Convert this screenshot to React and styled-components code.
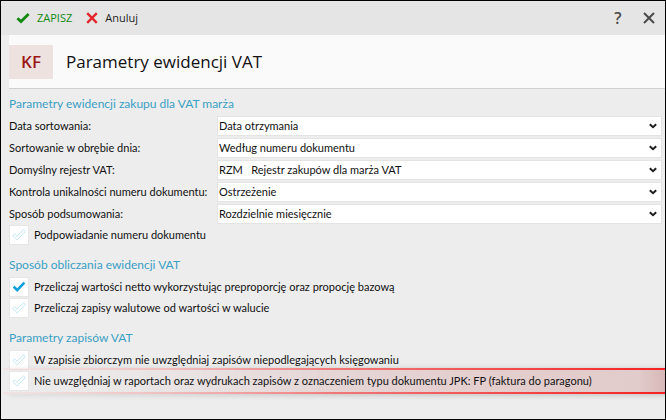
import React, { useState } from "react";
import styled, { createGlobalStyle, css } from "styled-components";

const SORT_FIELDS = [
	{
		id: "sortDate",
		label: "Data sortowania:",
		options: ["Data otrzymania", "Data wystawienia"],
	},
	{
		id: "sortInDay",
		label: "Sortowanie w obrębie dnia:",
		options: ["Według numeru dokumentu", "Według kolejności wpisu"],
	},
	{
		id: "register",
		label: "Domyślny rejestr VAT:",
		options: ["RZM\u00a0\u00a0\u00a0Rejestr zakupów dla marża VAT"],
	},
	{
		id: "unique",
		label: "Kontrola unikalności numeru dokumentu:",
		options: ["Ostrzeżenie", "Blokada"],
	},
	{
		id: "summary",
		label: "Sposób podsumowania:",
		options: ["Rozdzielnie miesięcznie", "Narastająco"],
	},
];

function SelectField({ id, label, options }) {
	return (
		<FieldRow>
			<FieldLabel htmlFor={id}>{label}</FieldLabel>
			<SelectBox>
				<Select id={id}>
					{options.map((v) => (
						<option key={v}>{v}</option>
					))}
				</Select>
				<Chevron viewBox="0 0 8 6" aria-hidden="true">
					<path d="M0.8 1.3 L4 4.2 L7.2 1.3" />
				</Chevron>
			</SelectBox>
		</FieldRow>
	);
}

function CheckField({ label, defaultChecked = false, marked = false }) {
	const [checked, setChecked] = useState(defaultChecked);
	return (
		<CheckRow $marked={marked}>
			<CheckBox>
				<CheckInput
					type="checkbox"
					checked={checked}
					onChange={() => setChecked(!checked)}
				/>
				<CheckMark $checked={checked} viewBox="0 0 14 12" aria-hidden="true">
					<path d="M0.7 6.6 L2.6 4.8 L5.2 7.2 L11.4 0.8 L13.3 2.6 L5.2 10.9 Z" />
				</CheckMark>
			</CheckBox>
			<CheckText>{label}</CheckText>
		</CheckRow>
	);
}

function App() {
	return (
		<>
			<GlobalStyle />
			<Window>
				<Toolbar>
					<ToolButton $color="#128a12">
						<SaveIcon viewBox="0 0 14 12" aria-hidden="true">
							<path d="M1.4 6.2 L5 9.6 L12.6 2" />
						</SaveIcon>
						ZAPISZ
					</ToolButton>
					<ToolButton $color="#1e1e1e">
						<CancelIcon viewBox="0 0 12 12" aria-hidden="true">
							<path d="M1.2 1.2 L10.8 10.8 M10.8 1.2 L1.2 10.8" />
						</CancelIcon>
						Anuluj
					</ToolButton>
					<Spacer />
					<HelpButton aria-label="Pomoc">?</HelpButton>
					<CloseButton aria-label="Zamknij">
						<CloseIcon viewBox="0 0 12 12" aria-hidden="true">
							<path d="M1 1 L11 11 M11 1 L1 11" />
						</CloseIcon>
					</CloseButton>
				</Toolbar>
				<Header>
					<Badge>KF</Badge>
					<Title>Parametry ewidencji VAT</Title>
				</Header>
				<Content>
					<Section>
						<SectionTitle>Parametry ewidencji zakupu dla VAT marża</SectionTitle>
						<FieldList>
							{SORT_FIELDS.map((v) => (
								<SelectField key={v.id} {...v} />
							))}
						</FieldList>
						<CheckField label="Podpowiadanie numeru dokumentu" />
					</Section>
					<Section>
						<SectionTitle>Sposób obliczania ewidencji VAT</SectionTitle>
						<CheckField
							label="Przeliczaj wartości netto wykorzystując preproporcję oraz propocję bazową"
							defaultChecked
						/>
						<CheckField label="Przeliczaj zapisy walutowe od wartości w walucie" />
					</Section>
					<Section>
						<SectionTitle>Parametry zapisów VAT</SectionTitle>
						<CheckField label="W zapisie zbiorczym nie uwzględniaj zapisów niepodlegających księgowaniu" />
						<CheckField
							label="Nie uwzględniaj w raportach oraz wydrukach zapisów z oznaczeniem typu dokumentu JPK: FP (faktura do paragonu)"
							marked
						/>
					</Section>
				</Content>
			</Window>
		</>
	);
}

const GlobalStyle = createGlobalStyle`
	* {
		box-sizing: border-box;
	}
	body {
		margin: 0;
		background: #ededed;
		color: #111;
		font: 11px/20px Lato, "Noto Sans", sans-serif;
	}
	button, select, input {
		margin: 0;
		padding: 0;
		border: 0;
		background: none;
		color: inherit;
		font: inherit;
	}
`;

const Window = styled.div`
	min-height: 100vh;
	border: 1px solid #000;
	background: #ededed;
	overflow: hidden;
`;

const Toolbar = styled.div`
	display: flex;
	align-items: center;
	height: 34px;
	padding: 0 10px 0 15px;
	background: #e5e5e5;
	font-family: "Open Sans", sans-serif;
`;

const ToolButton = styled.button`
	display: flex;
	align-items: center;
	gap: 7px;
	margin-right: 14px;
	color: ${({ $color }) => $color};
`;

const SaveIcon = styled.svg`
	width: 14px;
	height: 12px;
	fill: none;
	stroke: #128a12;
	stroke-width: 2.8;
`;

const CancelIcon = styled.svg`
	width: 12px;
	height: 12px;
	fill: none;
	stroke: #e3262e;
	stroke-width: 2.4;
`;

const Spacer = styled.div`
	flex: 1;
`;

const HelpButton = styled.button`
	width: 20px;
	margin-right: 15px;
	font-size: 16px;
	font-weight: 600;
	color: #4a4a4a;
`;

const CloseButton = styled.button`
	display: flex;
	align-items: center;
`;

const CloseIcon = styled.svg`
	width: 12px;
	height: 12px;
	fill: none;
	stroke: #4a4a4a;
	stroke-width: 2;
`;

const Header = styled.header`
	display: flex;
	align-items: center;
	gap: 13px;
	height: 54px;
	margin-left: 8px;
	border-bottom: 1px solid #d0d0d0;
	background: #fafafa;
	font-family: "Open Sans", sans-serif;
`;

const Badge = styled.div`
	width: 44px;
	background: #eee2e0;
	color: #9b1717;
	font-size: 17px;
	font-weight: 600;
	line-height: 34px;
	text-align: center;
`;

const Title = styled.h1`
	margin: 0;
	font-size: 17px;
	font-weight: 400;
	line-height: 34px;
`;

const Content = styled.main`
	padding: 5px 3px 4px 8px;
`;

const Section = styled.section`
	margin-bottom: 10px;
`;

const SectionTitle = styled.h2`
	margin: 0 0 2px;
	color: #3a9fc4;
	font-size: 12px;
	font-weight: 400;
	line-height: 20px;
`;

const FieldList = styled.div`
	display: grid;
	gap: 2px;
	margin-bottom: 1px;
`;

const FieldRow = styled.div`
	display: grid;
	grid-template-columns: 208px 1fr;
	align-items: center;
`;

const FieldLabel = styled.label`
	white-space: nowrap;
`;

const SelectBox = styled.div`
	display: grid;
	grid-template-columns: 1fr 12px;
	align-items: center;
	border: 1px solid #e4e4e4;
	background: #fff;
`;

const Select = styled.select`
	grid-area: 1 / 1 / 2 / 3;
	width: 100%;
	height: 18px;
	padding-left: 1px;
	appearance: none;
	line-height: 18px;
`;

const Chevron = styled.svg`
	grid-area: 1 / 2;
	width: 8px;
	height: 6px;
	fill: none;
	stroke: #1e1e1e;
	stroke-width: 2;
	pointer-events: none;
`;

// the frame lies over the neighbouring rows and runs to the window edge
const markedFrame = css`
	&::before {
		content: "";
		position: absolute;
		inset: -3px -3px -3px -6px;
		border: solid;
		border-width: 2px 0;
		border-image: linear-gradient(to right, #f4d6d6, #f08080 45%, #f52222) 1;
		background: linear-gradient(
			to right,
			rgba(222, 190, 190, 0),
			rgba(224, 200, 200, 0.6) 45%,
			#e4cdcd 75%,
			#e2cbcb 96%,
			#d8b8b8
		);
		box-shadow: 6px 1px 6px rgba(0, 0, 0, 0.2);
		mask-image: linear-gradient(to right, rgba(0, 0, 0, 0.4), #000 50%);
		mask-clip: no-clip;
	}
`;

const CheckRow = styled.label`
	position: relative;
	display: flex;
	align-items: center;
	gap: 5px;
	margin-bottom: 1px;
	${({ $marked }) => $marked && markedFrame}
`;

const CheckBox = styled.span`
	position: relative;
	display: grid;
	flex: none;
	place-items: center;
	width: 20px;
	height: 20px;
	border: 1px solid #e6e6e6;
	background: #fff;
`;

const CheckInput = styled.input`
	grid-area: 1 / 1;
	width: 18px;
	height: 18px;
	appearance: none;
`;

const CheckMark = styled.svg`
	grid-area: 1 / 1;
	width: 14px;
	height: 12px;
	fill: ${({ $checked }) => ($checked ? "#0fa0e0" : "#fff")};
	stroke: ${({ $checked }) => ($checked ? "none" : "#c4e8f4")};
	stroke-width: 1;
	pointer-events: none;
`;

const CheckText = styled.span`
	position: relative;
	white-space: nowrap;
`;

export default App;
